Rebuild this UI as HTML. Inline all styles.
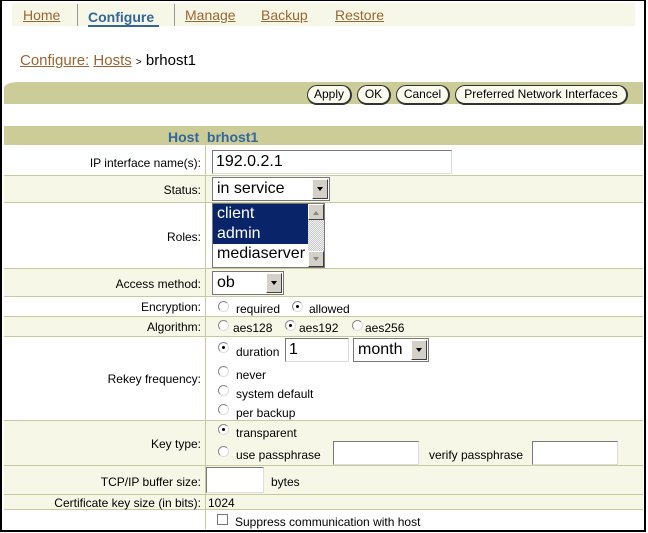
<!DOCTYPE html>
<html><head><style>
*{margin:0;padding:0;box-sizing:border-box}
body{width:648px;height:533px;background:#fff;font-family:"Liberation Sans",Arial,sans-serif;position:relative;overflow:hidden}
.frame{position:absolute;left:0;top:0;width:646px;height:532px;border:2px solid #000;border-top-width:1px}
.a{position:absolute;white-space:nowrap}
.nav{left:12px;top:3px;width:623px;height:23px;background:#f7f7e7}
.nl{font-size:14px;color:#996633;text-decoration:underline;top:7px}
.sep{width:1px;background:#999;top:4px;height:22px}
.band{left:4px;top:82px;width:639px;height:22px;background:#cccc99;border-top-left-radius:14px 6px}
.btn{top:85px;height:20px;border:1px solid #333;border-right-width:2px;border-bottom-width:2px;border-radius:10px;background:#fbfbf0;font-size:12px;text-align:center;line-height:17px}
.row{position:absolute;left:4px;width:639px;border-bottom:1px solid #c9c9a0}
.lab{position:absolute;left:0;width:197px;text-align:right;font-size:12px;color:#000}
.div{position:absolute;left:205px;width:1px;background:#c9c9a0}
.t12{font-size:12px}
.inp{position:absolute;border:1px solid #777;border-right-color:#ddd;border-bottom-color:#ddd;background:#fff;font-size:16px;padding-left:3px}
.sel{position:absolute;border:1px solid #777;background:#fff;font-size:16px;padding-left:4px}
.arr{position:absolute;right:1px;top:1px;bottom:1px;width:16px;background:#d4d0c8;border:1px solid;border-color:#fff #404040 #404040 #fff}
.arr:after{content:"";position:absolute;left:4px;top:7px;border:3px solid transparent;border-top:4px solid #000}
.sb{position:absolute;right:0;width:16px;height:16px;background:#d4d0c8;border:1px solid;border-color:#fff #404040 #404040 #fff}
.up:after{content:"";position:absolute;left:4px;top:3px;border:3px solid transparent;border-bottom:4px solid #888}
.dn:after{content:"";position:absolute;left:4px;top:5px;border:3px solid transparent;border-top:4px solid #888}
.rad{position:absolute;width:11px;height:11px;border-radius:50%;border:1px solid #888;border-right-color:#ddd;border-bottom-color:#ddd;background:#fff}
.rad.on:after{content:"";position:absolute;left:3px;top:3px;width:3px;height:3px;background:#000;border-radius:50%}
</style></head><body>
<div class="frame"></div>
<div class="a nav"></div>
<div class="a nl" style="left:23px">Home</div>
<div class="a sep" style="left:77px"></div>
<div class="a" style="left:88px;top:9px;font-size:14px;font-weight:bold;color:#336699">Configure</div>
<div class="a" style="left:88px;top:25px;width:71px;height:2px;background:#336699"></div>
<div class="a sep" style="left:174px"></div>
<div class="a nl" style="left:185px">Manage</div>
<div class="a nl" style="left:261px">Backup</div>
<div class="a nl" style="left:335px">Restore</div>
<div class="a" style="left:20px;top:52px;font-size:15px;color:#000"><span style="color:#996633;text-decoration:underline">Configure:</span> <span style="color:#996633;text-decoration:underline">Hosts</span> <span style="font-size:10px">&gt;</span> brhost1</div>
<div class="a band"></div>
<div class="a btn" style="left:307px;width:45px">Apply</div>
<div class="a btn" style="left:357px;width:34px">OK</div>
<div class="a btn" style="left:396px;width:54px">Cancel</div>
<div class="a btn" style="left:455px;width:173px">Preferred Network Interfaces</div>

<div class="row" style="top:126px;height:19px;background:#cccc99;border:0"></div>
<div class="a" style="left:168px;top:129px;font-size:14px;font-weight:bold;color:#336699">Host&nbsp; brhost1</div>
<div class="a" style="left:4px;top:145px;width:639px;height:384px;border:1px solid #c9c9a0;border-top:0"></div>

<div class="row" style="top:145px;height:31px;background:#fff"></div>
<div class="row" style="top:176px;height:27px;background:#f7f7e7"></div>
<div class="row" style="top:203px;height:66px;background:#fff"></div>
<div class="row" style="top:269px;height:28px;background:#f7f7e7"></div>
<div class="row" style="top:297px;height:20px;background:#fff"></div>
<div class="row" style="top:317px;height:20px;background:#f7f7e7"></div>
<div class="row" style="top:337px;height:84px;background:#fff"></div>
<div class="row" style="top:421px;height:45px;background:#f7f7e7"></div>
<div class="row" style="top:466px;height:29px;background:#f7f7e7"></div>
<div class="row" style="top:495px;height:15px;background:#f7f7e7"></div>
<div class="row" style="top:510px;height:19px;background:#fff;border:0"></div>
<div class="div" style="top:145px;height:384px"></div>

<div class="a lab" style="top:156px;left:4px">IP interface name(s):</div>
<div class="inp" style="left:212px;top:150px;width:240px;height:24px;line-height:22px">192.0.2.1</div>
<div class="a lab" style="top:183px;left:4px">Status:</div>
<div class="sel" style="left:212px;top:177px;width:118px;height:24px;line-height:22px">in service<div class="arr"></div></div>
<div class="a lab" style="top:230px;left:4px">Roles:</div>
<div class="a" style="left:212px;top:203px;width:113px;height:65px;border:1px solid #777;background:#fff;font-size:16px;line-height:20px">
<div style="background:#0a246a;color:#fff;width:95px;padding-left:4px">client</div>
<div style="background:#0a246a;color:#fff;width:95px;padding-left:4px">admin</div>
<div style="padding-left:4px">mediaserver</div>
<div style="position:absolute;right:0;top:0;width:16px;height:63px;background:repeating-conic-gradient(#c8c8c8 0 25%,#f4f4f4 0 50%) 0 0/2px 2px"></div>
<div class="sb up" style="top:0"></div>
<div class="sb dn" style="top:47px"></div>
</div>
<div class="a lab" style="top:277px;left:4px">Access method:</div>
<div class="sel" style="left:212px;top:271px;width:72px;height:24px;line-height:22px">ob<div class="arr"></div></div>

<div class="a lab" style="top:300px;left:4px">Encryption:</div>
<div class="rad" style="left:218px;top:301px"></div><div class="a t12" style="left:236px;top:302px">required</div>
<div class="rad on" style="left:292px;top:301px"></div><div class="a t12" style="left:309px;top:302px">allowed</div>
<div class="a lab" style="top:320px;left:4px">Algorithm:</div>
<div class="rad" style="left:218px;top:320px"></div><div class="a t12" style="left:233px;top:321px">aes128</div>
<div class="rad on" style="left:285px;top:320px"></div><div class="a t12" style="left:299px;top:321px">aes192</div>
<div class="rad" style="left:352px;top:320px"></div><div class="a t12" style="left:365px;top:321px">aes256</div>

<div class="a lab" style="top:372px;left:4px">Rekey frequency:</div>
<div class="rad on" style="left:218px;top:342px"></div><div class="a t12" style="left:236px;top:345px">duration</div>
<div class="inp" style="left:285px;top:338px;width:64px;height:24px;line-height:22px">1</div>
<div class="sel" style="left:353px;top:338px;width:76px;height:24px;line-height:22px">month<div class="arr"></div></div>
<div class="rad" style="left:218px;top:366px"></div><div class="a t12" style="left:236px;top:368px">never</div>
<div class="rad" style="left:218px;top:385px"></div><div class="a t12" style="left:236px;top:387px">system default</div>
<div class="rad" style="left:218px;top:404px"></div><div class="a t12" style="left:236px;top:406px">per backup</div>

<div class="a lab" style="top:437px;left:4px">Key type:</div>
<div class="rad on" style="left:218px;top:424px"></div><div class="a t12" style="left:236px;top:426px">transparent</div>
<div class="rad" style="left:218px;top:446px"></div><div class="a t12" style="left:236px;top:448px">use passphrase</div>
<div class="inp" style="left:333px;top:441px;width:86px;height:24px"></div>
<div class="a t12" style="left:429px;top:448px">verify passphrase</div>
<div class="inp" style="left:532px;top:441px;width:86px;height:24px"></div>

<div class="a lab" style="top:475px;left:4px">TCP/IP buffer size:</div>
<div class="inp" style="left:206px;top:467px;width:58px;height:26px"></div>
<div class="a t12" style="left:271px;top:475px">bytes</div>
<div class="a lab" style="top:496px;left:4px">Certificate key size (in bits):</div>
<div class="a t12" style="left:208px;top:496px">1024</div>
<div class="a" style="left:217px;top:514px;width:11px;height:11px;border:1px solid #777;background:#fff"></div>
<div class="a t12" style="left:235px;top:515px">Suppress communication with host</div>
</body></html>
